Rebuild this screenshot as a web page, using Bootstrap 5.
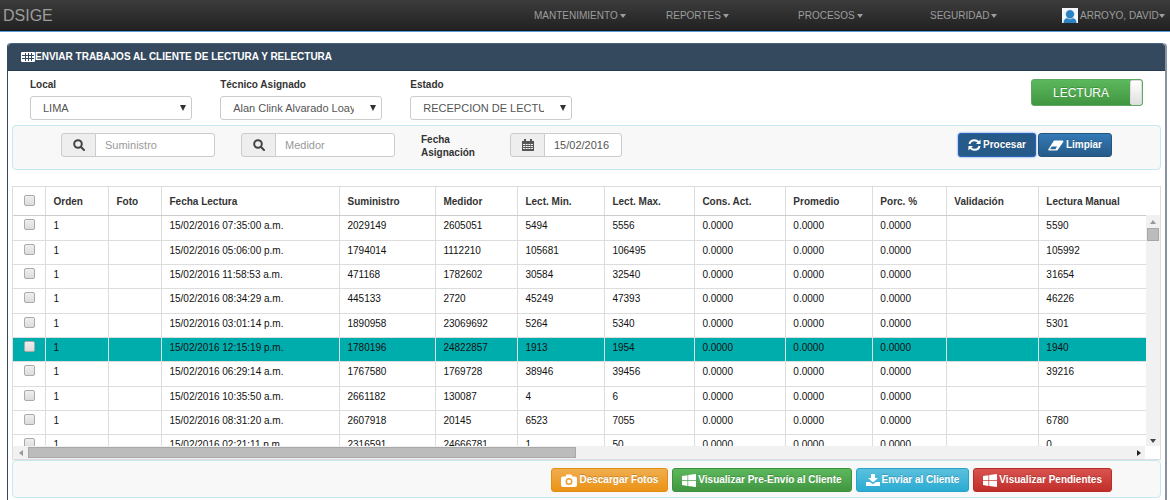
<!DOCTYPE html>
<html lang="es">
<head>
<meta charset="utf-8">
<meta name="viewport" content="width=device-width, initial-scale=1">
<title>DSIGE</title>
<link href="https://cdn.jsdelivr.net/npm/bootstrap@5.3.0/dist/css/bootstrap.min.css" rel="stylesheet">
<style>
  body { font-family: "Liberation Sans", Arial, sans-serif; font-size: 10px; line-height: 14px; color: #333; background: #fff; }
  .topbar { height: 32px; background: linear-gradient(#3c3c3c, #222 95%); border-bottom: 1px solid #5b9bd5; padding: 0; box-shadow: inset 0 -1px #101820; }
  .topbar .navbar-brand { font-size: 16px; line-height: 20px; color: #9d9d9d; padding: 0; margin: 0 0 0 3px; }
  .topbar .nav-item { width: 132px; }
  .topbar .nav-item:last-child { width: 109px; margin-right: 7px; }
  .topbar .nav-link { padding: 0; font-size: 10px; line-height: 20px; color: #9d9d9d; white-space: nowrap; display: flex; align-items: center; }
  .topbar .nav-link::after { margin-left: 2px; border-width: 4px 3px 0; }
  .topbar .nav-item:last-child .nav-link::after { margin-left: 0; }
  .user-icon { margin-right: 2px; }
  .work { margin: 11px 3px 0 7px; border: solid #34495e; border-width: 0 2px 0 1px; border-right-color: #8793a0; border-radius: 4px 4px 0 0; }
  .work-head { height: 28px; background: #34495e; border-top: 1px solid #4a6580; border-bottom: 1px solid #24384f; border-radius: 4px 4px 0 0; padding: 0 13px; color: #fff; font-size: 10px; font-weight: 700; margin: 0; }
  .work-body { padding: 0 4px; }
  .filters { --bs-gutter-x: 28px; margin: 0 4px; padding-top: 7px; height: 54px; }
  .caption { font-weight: 700; margin: 0; display: block; }
  .form-select, .form-control, .input-group-text { height: 24px; font-size: 11px; line-height: 16px; border: 1px solid #ccc; border-radius: 3px; color: #555; padding: 0 9px; min-height: 0; }
  .form-select { margin-top: 4px; padding: 0 27px 0 12px; text-overflow: clip; background-size: 6px 6px; background-position: right 5px center; background-image: url("data:image/svg+xml,%3Csvg xmlns='http://www.w3.org/2000/svg' viewBox='0 0 6 6'%3E%3Cpath d='M0 0h6L3 6z' fill='%23333'/%3E%3C/svg%3E"); }
  .form-control::placeholder { color: #999; }
  .input-group-text { background: #eee; width: 35px; justify-content: center; }
  .search-box { width: 154px; margin-right: 26px; }
  .date-box { width: 112px; }
  .date-caption { width: 89px; line-height: 13px; }
  .date-caption span { display: block; width: 60px; }
  .strip { background: #f8f8f8; border: 1px solid #c5e9f2; border-radius: 4px; padding: 7px 48px 10px; }
  .strip-foot { padding: 7px 48px 5px; }
  .actions { gap: 2px; }
  .btn { height: 24px; padding: 0 9px; font-size: 10px; line-height: 14px; font-weight: 700; color: #fff; border-radius: 3px; display: inline-flex; align-items: center; gap: 2px; white-space: nowrap; text-shadow: 0 -1px 0 rgba(0,0,0,.2); }
  .btn:hover { color: #fff; }
  .btn-blue { background: linear-gradient(#337ab7, #265a88); border-color: #245580; }
  .btn-blue.current { background: #265a88; border-color: #2a62b8; box-shadow: 0 0 2px #2f7bea; }
  .btn-orange { background: linear-gradient(#f0ad4e, #eb9316); border-color: #e38d13; }
  .btn-green { background: linear-gradient(#5cb85c, #419641); border-color: #3e8f3e; }
  .btn-cyan { background: linear-gradient(#5bc0de, #2aabd2); border-color: #28a4c9; }
  .btn-red { background: linear-gradient(#d9534f, #c12e2a); border-color: #b92c28; }
  .mode { width: 112px; height: 27px; padding: 0; margin-top: 1px; font-size: 12px; font-weight: 400; border-color: #5fa75f; gap: 0; }
  .mode .knob { width: 12px; height: 25px; border-radius: 2px; background: linear-gradient(#fff, #e0e0e0); border: 1px solid #ddd; }
  .grid-box { margin-top: 16px; border: 1px solid #ddd; }
  .grid-view { height: 259px; overflow: hidden; min-width: 0; }
  .readings { table-layout: fixed; margin: 0; width: 100%; color: #111; font-size: 10px; line-height: 14px; }
  .readings > :not(caption) > * > * { padding: 3px 7px 0; border: 0 solid #ddd; border-width: 0 1px 1px 0; vertical-align: top; box-shadow: none; background: none; color: inherit; white-space: nowrap; }
  .readings tr > :last-child { border-right: 0 !important; }
  .readings > thead > tr > th { height: 28px; padding-top: 8px; color: #333; border-bottom-color: #ccc; }
  .readings tbody td { height: 24px; }
  .readings tbody tr:nth-child(3n+1) td { height: 25px; }
  .readings tbody tr.chosen { background: #00adad; }
  .readings > :not(caption) > tr > :first-child { padding: 3px 0 0 11px; }
  .readings > thead > tr > th:first-child { padding-top: 8px; }
  .tick { appearance: none; display: block; width: 11px; height: 11px; margin: 0; border: 1px solid #aaa; border-radius: 2px; background: linear-gradient(#efefef, #dcdcdc); }
  .tick:checked { background: #777; }
  .vbar { width: 15px; margin-top: 28px; background: #f1f1f1; padding: 5px 1px 3px; }
  .vbar .thumb { height: 13px; width: 12px; background: #bcbcbc; border: 1px solid #a8a8a8; }
  .hbar { height: 13px; background: #f1f1f1; padding-left: 6px; }
  .hbar .thumb { width: 48%; height: 11px; background: #bcbcbc; border: 1px solid #a8a8a8; margin-left: 5px; }
  .hbar .corner { width: 15px; height: 13px; background: #fff; }
  svg { flex: none; display: block; }
</style>
</head>
<body class="min-vh-100 d-flex flex-column">

<nav class="navbar navbar-expand topbar">
  <a class="navbar-brand" href="#">DSIGE</a>
  <ul class="navbar-nav ms-auto">
    <li class="nav-item"><a class="nav-link dropdown-toggle" href="#">MANTENIMIENTO</a></li>
    <li class="nav-item"><a class="nav-link dropdown-toggle" href="#">REPORTES</a></li>
    <li class="nav-item"><a class="nav-link dropdown-toggle" href="#">PROCESOS</a></li>
    <li class="nav-item"><a class="nav-link dropdown-toggle" href="#">SEGURIDAD</a></li>
    <li class="nav-item"><a class="nav-link dropdown-toggle" href="#"><svg class="user-icon" width="16" height="15" viewBox="0 0 16 15"><path fill="#f4f8fb" d="M0 0h16v15H0z"/><path fill="#2b82c4" d="M1.500 15c0-3 1.500-4.500 4-5h5c2.500.5 4 2 4 5z"/><ellipse cx="8" cy="6.300" rx="4.500" ry="4.600" fill="#2b82c4" stroke="#f4f8fb" stroke-width=".7"/></svg>ARROYO, DAVID</a></li>
  </ul>
</nav>

<main class="work flex-grow-1">
  <h1 class="work-head d-flex align-items-center"><svg width="14" height="10" viewBox="0 0 14 10"><rect width="14" height="10" rx="1" fill="#fff"/><path d="M1 3.500h12M1 6.500h12M4.500 1v8M7.500 1v8M10.500 1v8" stroke="#34495e"/></svg>ENVIAR TRABAJOS AL CLIENTE DE LECTURA Y RELECTURA</h1>

  <div class="work-body">
    <div class="row filters">
      <div class="col-2"><label class="caption" for="local">Local</label><select class="form-select" id="local"><option>LIMA</option></select></div>
      <div class="col-2"><label class="caption" for="tecnico">Técnico Asignado</label><select class="form-select" id="tecnico"><option>Alan Clink Alvarado Loayza</option></select></div>
      <div class="col-2"><label class="caption" for="estado">Estado</label><select class="form-select" id="estado"><option>RECEPCION DE LECTURAS</option></select></div>
      <div class="col-auto ms-auto"><button type="button" role="switch" aria-checked="true" class="btn btn-green mode"><span class="flex-grow-1">LECTURA</span><span class="knob"></span></button></div>
    </div>

    <div class="strip d-flex align-items-start">
      <div class="input-group search-box">
        <label class="input-group-text" for="suministro" aria-label="Suministro"><svg width="12" height="12" viewBox="0 0 12 12" fill="none" stroke="#444" stroke-width="2"><circle cx="5" cy="5" r="3.800"/><path d="M8 8l3 3" stroke-linecap="round"/></svg></label>
        <input class="form-control" id="suministro" type="text" placeholder="Suministro">
      </div>
      <div class="input-group search-box">
        <label class="input-group-text" for="medidor" aria-label="Medidor"><svg width="12" height="12" viewBox="0 0 12 12" fill="none" stroke="#444" stroke-width="2"><circle cx="5" cy="5" r="3.800"/><path d="M8 8l3 3" stroke-linecap="round"/></svg></label>
        <input class="form-control" id="medidor" type="text" placeholder="Medidor">
      </div>
      <label class="caption date-caption" for="fecha"><span>Fecha Asignación</span></label>
      <div class="input-group date-box">
        <span class="input-group-text"><svg width="12" height="12" viewBox="0 0 12 12"><path fill="#555" d="M0 2h2V0h2v2h4V0h2v2h2v10H0z"/><path d="M1 5.500h10M1 7.500h10M1 9.500h10" stroke="#eee" stroke-width="1.200"/><path d="M3.500 4v7M6 4v7M8.500 4v7" stroke="#666" stroke-width=".7"/></svg></span>
        <input class="form-control" id="fecha" type="text" value="15/02/2016">
      </div>
      <div class="d-flex ms-auto actions">
        <button type="button" class="btn btn-blue current"><svg width="13" height="12" viewBox="0 0 13 12"><g fill="none" stroke="#fff" stroke-width="2"><path d="M1.500 5C2 2.500 4 1.300 6.500 1.300c1.800 0 3 .7 4 1.900M11.500 7c-.5 2.500-2.500 3.700-5 3.700-1.800 0-3-.7-4-1.900"/></g><path fill="#fff" d="M12.600.5V5H8zM.4 11.500V7H5z"/></svg>Procesar</button>
        <button type="button" class="btn btn-blue"><svg width="16" height="11" viewBox="0 0 16 11"><path fill="#fff" d="M6 .5h8.500q1.300.2.700 1.500L10 9.500q-.5 1-1.500 1H1Q-.2 10.200.5 9z"/><path fill="#2a6a9f" d="M3.800 6.500h5.200L7.500 9.200H2z"/></svg>Limpiar</button>
      </div>
    </div>

    <div class="grid-box">
      <div class="d-flex">
        <div class="grid-view flex-grow-1">
          <table class="table readings">
            <colgroup><col style="width:2.91%"><col style="width:5.56%"><col style="width:4.68%"><col style="width:15.71%"><col style="width:8.47%"><col style="width:7.24%"><col style="width:7.68%"><col style="width:7.94%"><col style="width:8.03%"><col style="width:7.68%"><col style="width:6.53%"><col style="width:8.12%"><col style="width:9.45%"></colgroup>
            <thead><tr><th><input class="tick" type="checkbox" aria-label="Todos"></th><th>Orden</th><th>Foto</th><th>Fecha Lectura</th><th>Suministro</th><th>Medidor</th><th>Lect. Min.</th><th>Lect. Max.</th><th>Cons. Act.</th><th>Promedio</th><th>Porc. %</th><th>Validación</th><th>Lectura Manual</th></tr></thead>
            <tbody id="rows"></tbody>
          </table>
        </div>
        <div class="vbar d-flex flex-column justify-content-between align-items-center">
          <div><svg class="mx-auto mb-1" width="6" height="4" viewBox="0 0 6 4"><path fill="#999" d="M0 4l3-4 3 4z"/></svg><div class="thumb"></div></div>
          <svg width="6" height="4" viewBox="0 0 6 4"><path fill="#444" d="M0 0h6L3 4z"/></svg>
        </div>
      </div>
      <div class="hbar d-flex align-items-center">
        <svg width="4" height="6" viewBox="0 0 4 6"><path fill="#999" d="M4 0v6L0 3z"/></svg>
        <div class="thumb"></div>
        <svg class="ms-auto me-1" width="4" height="6" viewBox="0 0 4 6"><path fill="#222" d="M0 0v6l4-3z"/></svg>
        <div class="corner"></div>
      </div>
    </div>

    <div class="strip strip-foot d-flex justify-content-end">
      <div class="d-flex gap-1">
        <button type="button" class="btn btn-orange"><svg width="16" height="13" viewBox="0 0 16 13"><path fill="#fff" fill-rule="evenodd" d="M2 2.500h2.500L5.500.5h5l1 2H14q2 0 2 2V11q0 2-2 2H2q-2 0-2-2V4.500q0-2 2-2zM8 4a3.500 3.500 0 1 0 0 7 3.500 3.500 0 0 0 0-7zm0 1.500a2 2 0 1 1 0 4 2 2 0 0 1 0-4z"/></svg>Descargar Fotos</button>
        <button type="button" class="btn btn-green"><svg width="14" height="13" viewBox="0 0 14 13"><path fill="#fff" d="M0 2l5.500-.8v5H0zM6.200 1.100L14 0v6.200H6.200zM0 6.900h5.500v5L0 11.100zM6.200 6.900H14V13l-7.800-1z"/></svg>Visualizar Pre-Envío al Cliente</button>
        <button type="button" class="btn btn-cyan"><svg width="14" height="12" viewBox="0 0 14 12"><path fill="#fff" d="M5 0h4v4h3L7 8.500 2 4h3zM0 8h4l3 2.200L10 8h4v4H0z"/></svg>Enviar al Cliente</button>
        <button type="button" class="btn btn-red"><svg width="14" height="13" viewBox="0 0 14 13"><path fill="#fff" d="M0 2l5.500-.8v5H0zM6.200 1.100L14 0v6.200H6.200zM0 6.900h5.500v5L0 11.100zM6.200 6.900H14V13l-7.800-1z"/></svg>Visualizar Pendientes</button>
      </div>
    </div>
  </div>
</main>

<script src="https://cdn.jsdelivr.net/npm/bootstrap@5.3.0/dist/js/bootstrap.bundle.min.js"></script>
<script>
  const data = [
    ['07:35:00 a.m.', '2029149', '2605051', '5494', '5556', '5590'],
    ['05:06:00 p.m.', '1794014', '1112210', '105681', '106495', '105992'],
    ['11:58:53 a.m.', '471168', '1782602', '30584', '32540', '31654'],
    ['08:34:29 a.m.', '445133', '2720', '45249', '47393', '46226'],
    ['03:01:14 p.m.', '1890958', '23069692', '5264', '5340', '5301'],
    ['12:15:19 p.m.', '1780196', '24822857', '1913', '1954', '1940'],
    ['06:29:14 a.m.', '1767580', '1769728', '38946', '39456', '39216'],
    ['10:35:50 a.m.', '2661182', '130087', '4', '6', ''],
    ['08:31:20 a.m.', '2607918', '20145', '6523', '7055', '6780'],
    ['02:21:11 p.m.', '2316591', '24666781', '1', '50', '0']
  ];
  document.getElementById('rows').innerHTML = data.map(([time, supply, meter, min, max, manual], i) => {
    const cells = ['1', '', '15/02/2016 ' + time, supply, meter, min, max, '0.0000', '0.0000', '0.0000', '', manual];
    return `<tr${i === 5 ? ' class="chosen"' : ''}><td><input class="tick" type="checkbox" aria-label="Fila ${i + 1}"></td>` +
      cells.map(c => `<td>${c}</td>`).join('') + '</tr>';
  }).join('');
</script>
</body>
</html>
